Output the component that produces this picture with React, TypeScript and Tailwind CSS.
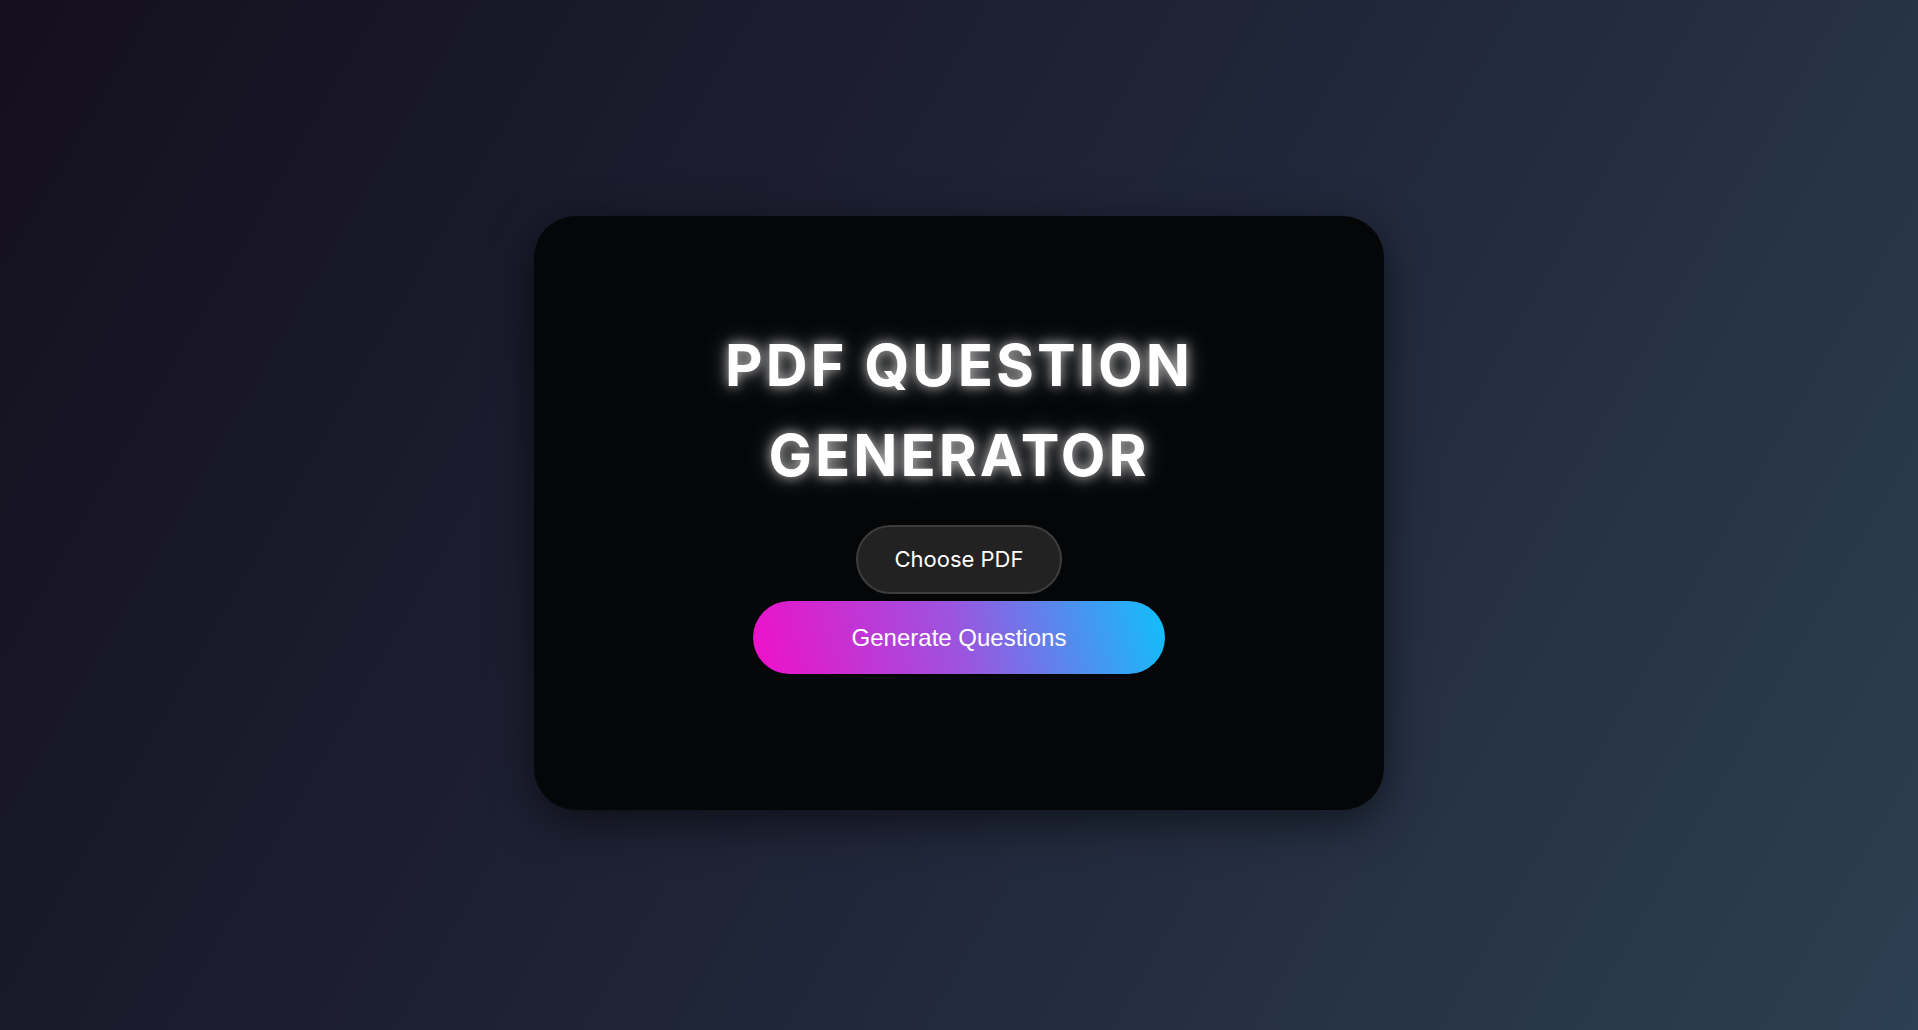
export default function App() {
  return (
    <div className="min-h-screen w-full flex items-center justify-center bg-[linear-gradient(120deg,#140f1e_0%,#1f2437_50%,#2d3f52_100%)]">
      {/* Card */}
      <div className="w-[850px] h-[594px] mb-[4px] rounded-[42px] bg-[#050608] shadow-[0_12px_45px_rgba(0,0,0,0.55)] flex flex-col items-center pt-[104px]">
        <h1 className="text-white text-center font-bold uppercase text-[58px] leading-[90px] tracking-[3px] font-['Inter','Open_Sans',sans-serif] [text-shadow:0_0_12px_rgba(255,255,255,0.7),0_0_26px_rgba(255,255,255,0.35)]">
          PDF Question
          <br />
          Generator
        </h1>

        <button className="mt-[25px] h-[69px] px-[36px] rounded-full bg-[#222222] border-2 border-[#3d3d3d] text-white text-[22px] font-['Inter','Open_Sans',sans-serif]">
          Choose PDF
        </button>

        <button className="mt-[7px] h-[73px] w-[412px] rounded-full bg-[linear-gradient(75deg,#f00fc9_0%,#9b55df_50%,#0fc0fb_100%)] text-white text-[24px] font-['Liberation_Sans',Arial,sans-serif]">
          Generate Questions
        </button>
      </div>
    </div>
  );
}
